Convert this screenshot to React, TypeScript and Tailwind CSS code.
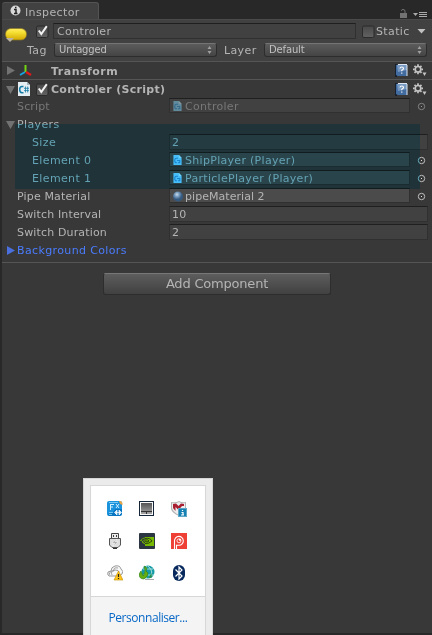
import React from 'react';

const field =
  'border border-[#303030] border-t-[#1f1f1f] flex items-center';

function Help() {
  return (
    <svg width="13" height="13" viewBox="0 0 13 13" className="shrink-0">
      <path d="M0 0H2V13H0Z" fill="#17202e" />
      <path d="M1 1H12V12H3L1 11Z" fill="#426b9f" />
      <path d="M2 1H12V6L3 8Z" fill="#7799c2" />
      <path d="M12 1V12M3 .5H12" stroke="#dce7f3" />
      <path d="M5 4.5Q5 3 6.7 3Q8.5 3 8.5 4.5Q8.5 5.4 6.8 6.2V7.3M6.8 8.5V9.7" stroke="#fff" strokeWidth="1.1" fill="none" />
    </svg>
  );
}

function Gear() {
  return (
    <svg width="14" height="13" viewBox="0 0 14 13" className="shrink-0">
      <circle cx="5" cy="5.3" r="2.8" fill="none" stroke="#c4c4c4" strokeWidth="1.7" />
      <g stroke="#c4c4c4" strokeWidth="1.7">
        <path d="M5 .3V2M5 8.6V10.3M0 5.3H1.7M8.3 5.3H10M1.5 1.8L2.7 3M7.3 7.6L8.5 8.8M1.5 8.8L2.7 7.6M7.3 3L8.5 1.8" />
      </g>
      <path d="M9.5 8.5H13.5L11.5 12Z" fill="#c4c4c4" />
    </svg>
  );
}

function Script({ small = false }: { small?: boolean }) {
  return small ? (
    <svg width="9" height="10" viewBox="0 0 9 11" className="shrink-0">
      <path d="M0 0H6L9 3V11H0Z" fill="#83d3f9" />
      <path d="M6 0V3H9" fill="#d4eef8" />
      <path d="M5 3.5H3Q1.5 3.5 1.5 6Q1.5 8.5 3 8.5H4M4 6H7V8.5H5" stroke="#2894cf" strokeWidth="1.2" fill="none" />
    </svg>
  ) : (
    <svg width="12" height="14" viewBox="0 0 12 14" className="shrink-0">
      <path d="M0 0H9L12 3V14H0Z" fill="#e4eef2" />
      <path d="M9 0V3H12Z" fill="#9fb4bd" />
      <path d="M5.5 4.5H4Q1.7 4.5 1.7 7.5Q1.7 10.7 4 10.7H5.5" stroke="#137ba6" strokeWidth="1.5" fill="none" />
      <path d="M7.5 4.5V10.5M9.7 4.5V10.5M6 6.3H11M6 8.6H11" stroke="#137ba6" strokeWidth=".8" />
    </svg>
  );
}

function Check({ on = true }: { on?: boolean }) {
  return (
    <svg width="13" height="13" viewBox="0 0 13 13" className="shrink-0">
      <defs>
        <linearGradient id="cb" x1="0" y1="0" x2="0" y2="1">
          <stop stopColor="#484848" />
          <stop offset="1" stopColor="#626262" />
        </linearGradient>
      </defs>
      <rect x=".5" y="1" width="11.5" height="11.5" rx="1.5" fill="url(#cb)" stroke="#2b2b2b" />
      {on && <path d="M2.8 5.5L5.3 9L10.8 1.2" fill="none" stroke="#f2f2f2" strokeWidth="2" />}
    </svg>
  );
}

function Fold({ open = false, color = '#727272' }: { open?: boolean; color?: string }) {
  return (
    <svg width="9" height="9" viewBox="0 0 9 9" className="shrink-0">
      <path d={open ? 'M0 1H9L4.5 9Z' : 'M1 0V9L9 4.5Z'} fill={color} />
    </svg>
  );
}

function Target({ dim = false }: { dim?: boolean }) {
  return (
    <svg width="9" height="9" viewBox="0 0 9 9" className="ml-[7px] shrink-0">
      <circle cx="4.5" cy="4.5" r="3.2" fill="none" stroke={dim ? '#828282' : '#bebebe'} />
      <rect x="4" y="4" width="1" height="1" fill={dim ? '#999' : '#ddd'} />
    </svg>
  );
}

function Popup({ text, className }: { text: string; className: string }) {
  return (
    <div className={`flex h-[14px] items-center justify-between rounded-[3px] border border-[#2d2d2d] border-t-[#747474] bg-linear-to-b from-[#5c5c5c] to-[#444444] pr-[4px] pl-[4px] text-[10px] tracking-[-0.15px] text-[#c0c0c0] ${className}`}>
      <span>{text}</span>
      <svg width="5" height="8" viewBox="0 0 5 8">
        <path d="M.5 3H4.5L2.5 0ZM.5 5H4.5L2.5 8Z" fill="#a0a0a0" />
      </svg>
    </div>
  );
}

function Row({ label, indent = false, dim = false, object, children }: {
  label: string; indent?: boolean; dim?: boolean; object?: boolean; children: React.ReactNode;
}) {
  return (
    <div className={`flex h-[18px] items-center pb-[2px] ${dim ? 'text-[#777777]' : 'text-[#b4b4b4]'}`}>
      <div className={indent ? 'w-[137px] shrink-0 ml-[30px]' : 'w-[152px] shrink-0 ml-[15px] tracking-[0.15px]'}>{label}</div>
      <div className={`${field} ${object ? 'mb-px h-[15px] w-[241px] pt-px pl-[3px] gap-[3px] tracking-[0.3px]' : 'h-4 w-[259px] pl-[2px]'} ${object && !dim ? 'bg-[#4b4b4b]' : 'bg-[#414141]'}`}>
        {children}
      </div>
      {object && <Target dim={dim} />}
    </div>
  );
}

function TrayIcons() {
  const c = 'h-4 w-4';
  return (
    <div className="grid grid-cols-3 gap-4 pt-[15px] pl-[16px] w-[96px]">
      <svg className={c} viewBox="0 0 16 16">
        <rect width="15" height="15" rx="2" fill="#1b92dc" />
        <path d="M1 13Q7 12 8 8H15V13L13 15H2Z" fill="#0875c0" />
        <path d="M3.5 3V9M3.5 3.5H7M3.5 6H6M9 3L12 7M12 3L9 7" stroke="#d0f0ff" fill="none" />
        <path d="M2 11.5H6M2 13.5H5M2 1.5H11" stroke="#8fd6f7" strokeWidth=".8" />
        <path d="M7.5 11.5L10 9V14ZM14.5 11.5L12 9V14ZM9 11.5H13" stroke="#fff" strokeWidth=".7" fill="#d8eefa" />
        <path d="M12 0H14L15.5 2V4L13 3Z" fill="#e4a64b" />
      </svg>
      <svg className={c} viewBox="0 0 16 16">
        <defs><linearGradient id="pad" x1="0" y1="0" x2="0" y2="1"><stop stopColor="#555" /><stop offset="1" stopColor="#a5a5a5" /></linearGradient></defs>
        <rect x=".5" y=".5" width="14" height="14" fill="#f8f8f8" stroke="#152538" />
        <rect x="2" y="2" width="11" height="11" fill="url(#pad)" />
        <path d="M2 10.5H13M7.5 11V13" stroke="#333" />
      </svg>
      <svg className={c} viewBox="0 0 16 16">
        <path d="M0 1Q5 2 8 0Q11 2 15 1V8Q14 12 8 15Q1 12 0 8Z" fill="#b4b4b4" />
        <path d="M1 2Q5 3 8 1Q11 3 14 2V7Q13 11 8 14Q2 11 1 7Z" fill="#eee" />
        <path d="M2 3L5 2.5L7.5 5L10 2.5L13 3V5H11L7.5 9L4.5 6V10L2 7Z" fill="#a91f31" />
        <rect x="7.5" y="7.5" width="8" height="8" fill="#1682b4" stroke="#5fa6c7" />
        <path d="M11.5 9V10M10.5 11.5H12V14M10 14H13" stroke="#fff" strokeWidth="1.2" fill="none" />
      </svg>
      <svg className={c} viewBox="0 0 16 16">
        <path d="M4.5 6V.5H11.5V6" fill="#eee" stroke="#444" />
        <path d="M6 2H7V4H6ZM9 2H10V4H9Z" fill="#444" />
        <path d="M2.5 5.5H13.5V12L11 14.5H5L2.5 12Z" fill="#dedede" stroke="#555" />
        <path d="M10 6L5 10H8L6 13L11 9H8Z" fill="#959595" stroke="#fff" strokeWidth=".5" />
        <path d="M6 15.5H10" stroke="#333" />
      </svg>
      <svg className={c} viewBox="0 0 16 16">
        <rect width="16" height="16" rx="1" fill="#2b3542" />
        <path d="M6 4H15V13H6Z" fill="#76b900" />
        <path d="M1 8Q5 3 10 6Q13 8 11 9Q7 13 3 9Q5 6 8 7Q10 9 7 9L5 8M2 7Q5 12 9 11L13 9" stroke="#76b900" strokeWidth=".8" fill="none" />
        <path d="M6 5.5Q11 4.5 13 8Q10 11 6 10.5M6 7Q9 6 10 8Q8 10 6 8" stroke="#24370d" strokeWidth=".9" fill="none" />
      </svg>
      <svg className={c} viewBox="0 0 16 16">
        <rect width="16" height="16" fill="#ef4036" />
        <path d="M3.5 16V8A4.4 4.4 0 1 1 8 12.2H5.5V16" fill="none" stroke="#fff" strokeWidth="1.1" />
        <circle cx="8" cy="7.8" r="2" fill="none" stroke="#fff" strokeWidth=".8" />
        <circle cx="9" cy="6.8" r="1.1" fill="#fff" />
      </svg>
      <svg className={c} viewBox="0 0 16 16">
        <path d="M2 11Q0 10 1 7L4 6Q4 2 8 1Q13 0 14 4Q17 6 15 9L12 11Z" fill="#f8f8f8" stroke="#999" />
        <path d="M2 10Q3 5 7 6Q6 2 11 3M5 10Q3 6 8 5Q12 5 12 7" stroke="#888" strokeWidth=".8" fill="none" />
        <path d="M11.5 6L16 15H7Z" fill="#ffc419" stroke="#c58e00" strokeWidth=".6" />
        <path d="M11.5 9V12M11.5 13V14" stroke="#222" strokeWidth="1.2" />
      </svg>
      <svg className={c} viewBox="0 0 16 16">
        <circle cx="9" cy="7" r="6.5" fill="#159ba5" />
        <path d="M9 1Q16 7 10 13M4 4H14M4 10H15M8 1Q4 7 8 14" stroke="#afe2e1" strokeWidth=".9" fill="none" />
        <path d="M2 6L0 9Q0 14 5 14Q9 12 9 8L7 6L8 3L5 1L6 5Q6 8 4 11Z" fill="#64ae13" stroke="#277b1b" strokeWidth=".6" />
        <path d="M10 13L12 10V13" fill="none" stroke="#268a44" strokeWidth="1.2" />
        <path d="M6 14.5H15" stroke="#aaa" />
      </svg>
      <svg className={c} viewBox="0 0 16 16">
        <rect x="2" width="12" height="16" rx="6" fill="#06285c" />
        <path d="M4.5 4.5L11 11L8 14V2L11 5L4.5 11.5" fill="none" stroke="#fff" strokeWidth="1.2" />
      </svg>
    </div>
  );
}

function Tray() {
  return (
    <div className="absolute top-[478px] left-[83px] h-[157px] w-[130px] border border-b-0 border-[#d5d5d5] bg-[#ebebeb] px-[6px] pt-[6px]">
      <div className="h-[150px] border border-b-0 border-[#d7d7d7] bg-white">
        <div className="h-[111px] border-b border-[#d7d7d7]"><TrayIcons /></div>
        <div className="flex h-[38px] items-center justify-center bg-[#f4f4f4] pt-[4px] font-['Open_Sans',sans-serif] text-[12px] tracking-[-0.45px] text-[#0868c7]">Personnaliser...</div>
      </div>
    </div>
  );
}

export default function App() {
  return (
    <div className="relative h-[635px] w-[432px] overflow-hidden bg-[#282828] font-['DejaVu_Sans',sans-serif] text-[11px] leading-none tracking-[0.37px] text-[#b4b4b4]">
      <header className="flex h-[19px] items-end justify-between pl-[2px] pr-[5px]">
        <div className="flex h-[17px] w-[97px] items-center rounded-t-[3px] border-t border-r border-[#535353] bg-[#414141] pt-[2px] pl-[8px]">
          <svg width="11" height="11" viewBox="0 0 11 11" className="mr-[4px] mb-[3px]">
            <circle cx="5.5" cy="5.5" r="5" fill="#d8d8d8" />
            <path d="M4 4.5H6V8M4 8.5H7.5M5 2.5H6.5" stroke="#222" strokeWidth="1.5" fill="none" />
          </svg>
          Inspector
        </div>
        <div className="flex items-end gap-[6px] pb-px">
          <svg width="8" height="9" viewBox="0 0 8 9"><path d="M1 4H8V9H1Z" fill="#737373" /><path d="M2.5 2V1.5Q2.5 .5 4 .5Q6 .5 6 2V5" fill="none" stroke="#737373" /></svg>
          <svg width="14" height="7" viewBox="0 0 14 7"><path d="M0 2H5L2.5 5Z" fill="#aaa" /><path d="M6 1.5H14M6 3.5H14M6 5.5H14" stroke="#aaa" /></svg>
        </div>
      </header>

      <main className="ml-[2px] h-[614px] bg-[#383838]">
        <section className="flex h-[42px] bg-[#414141] border-t border-[#4a4a4a]">
          <svg width="23" height="15" viewBox="0 0 23 15" className="mt-[8px] ml-[3px] shrink-0">
            <defs><linearGradient id="pill" x1="0" y1="0" x2="0" y2="1"><stop stopColor="#ffed66" /><stop offset=".35" stopColor="#f5df32" /><stop offset="1" stopColor="#d3a902" /></linearGradient></defs>
            <rect x=".5" y=".5" width="21" height="11.5" rx="5.5" fill="url(#pill)" stroke="#8b7622" strokeWidth=".7" />
            <path d="M1 10H9L5 14Z" fill="#b9b2a0" />
          </svg>
          <div className="flex w-[404px] flex-col">
            <div className="mt-[3px] flex h-4 items-center pl-[8px]">
              <Check />
              <div className={`${field} ml-[4px] h-4 w-[303px] bg-[#414141] pl-[3px]`}>Controler</div>
              <div className="ml-[6px] flex items-center"><Check on={false} /></div>
              <span className="ml-[1px] w-[41px]">Static</span>
              <svg width="9" height="6" viewBox="0 0 9 6"><path d="M.5 1H8.5L4.5 5.5Z" fill="#c0c0c0" /></svg>
            </div>
            <div className="mt-[4px] flex h-[14px] items-center">
              <span className="ml-[-1px] w-[26px] shrink-0">Tag</span>
              <Popup text="Untagged" className="ml-[1px] w-[163px] shrink-0" />
              <span className="ml-[7px] w-[40px] shrink-0">Layer</span>
              <Popup text="Default" className="w-[163px] shrink-0" />
            </div>
          </div>
        </section>

        <section className="flex h-[18px] items-center border-t border-[#555555] pl-[4px]">
          <Fold />
          <svg width="15" height="14" viewBox="0 0 15 14" className="ml-[4px]">
            <path d="M6.5 8V1" stroke="#72d713" strokeWidth="2" /><path d="M6 8L1 11" stroke="#14a5e1" strokeWidth="2" /><path d="M7 8L12 11" stroke="#df1919" strokeWidth="2.4" />
          </svg>
          <b className="ml-[17px] grow tracking-[0.5px] pt-[1px]">Transform</b>
          <Help /><span className="ml-[5px] mr-[5px]"><Gear /></span>
        </section>

        <section className="relative h-[183px] border-t border-[#555555]">
          <div className="flex h-[18px] items-center pl-[4px]">
            <Fold open />
            <span className="ml-[3px]"><Script /></span>
            <span className="ml-[6px]"><Check /></span>
            <b className="ml-[2px] grow tracking-[0.3px] pt-px">Controler (Script)</b>
            <Help /><span className="ml-[5px] mr-[5px]"><Gear /></span>
          </div>
          <Row label="Script" dim object><span className="opacity-50"><Script small /></span>Controler</Row>
          <div className="flex h-[18px] items-center pb-[2px] pl-[4px]"><Fold open /><span className="ml-[2px]">Players</span></div>
          <Row label="Size" indent>2</Row>
          <Row label="Element 0" indent object><Script small />ShipPlayer (Player)</Row>
          <Row label="Element 1" indent object><Script small />ParticlePlayer (Player)</Row>
          <Row label="Pipe Material" object>
            <svg width="10" height="11" viewBox="0 0 10 11" className="mr-[-1px] shrink-0"><defs><radialGradient id="ball" cx=".4" cy=".3"><stop stopColor="#c6dced" /><stop offset=".5" stopColor="#7296b9" /><stop offset="1" stopColor="#34597f" /></radialGradient></defs><circle cx="5" cy="5.5" r="5" fill="url(#ball)" /></svg>
            <span className="tracking-[0.05px]">pipeMaterial 2</span>
          </Row>
          <Row label="Switch Interval">10</Row>
          <Row label="Switch Duration">2</Row>
          <div className="flex h-[18px] items-center pb-[2px] pl-[4px] text-[#4a7cff]"><Fold color="#4a6fde" /><span className="ml-[2px]">Background Colors</span></div>
          <div className="absolute top-[44px] left-[13px] h-[65px] w-[405px] bg-[#8ce6ff] mix-blend-multiply" />
        </section>

        <section className="flex justify-center border-t border-[#555555] pt-[10px]">
          <button className="h-[22px] w-[228px] rounded-[3px] border border-[#2d2d2d] border-t-[#777777] bg-linear-to-b from-[#5d5d5d] to-[#414141] pb-[2px] text-[13px] tracking-[-0.2px]">Add Component</button>
        </section>
      </main>
      <Tray />
    </div>
  );
}
